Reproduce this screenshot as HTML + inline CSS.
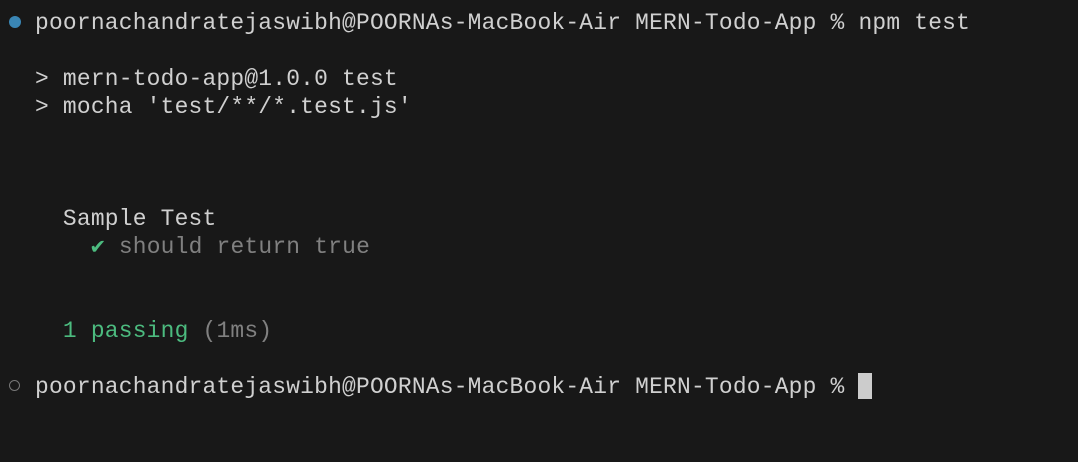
<!DOCTYPE html>
<html><head><style>
html,body{margin:0;padding:0;background:#181818;width:1078px;height:462px;overflow:hidden}
pre{position:absolute;left:35px;top:9px;margin:0;font-family:"Liberation Mono",monospace;font-size:22.9px;letter-spacing:0.22px;line-height:28px;color:#d0d0d0}
.g{color:#4cbb7f}.d{color:#808080}
.cur{display:inline-block;width:14px;height:26px;background:#cccccc;vertical-align:-6px}
.dot{position:absolute;left:9px;width:12px;height:12px;border-radius:50%}
</style></head><body>
<div class="dot" style="top:16px;background:#3a86b5"></div>
<div class="dot" style="top:380px;width:9px;height:9px;border:1.5px solid #777;left:9px"></div>
<pre>poornachandratejaswibh@POORNAs-MacBook-Air MERN-Todo-App % npm test

> mern-todo-app@1.0.0 test
> mocha 'test/**/*.test.js'



  Sample Test
    <span class="g">✔</span> <span class="d">should return true</span>


  <span class="g">1 passing</span> <span class="d">(1ms)</span>

poornachandratejaswibh@POORNAs-MacBook-Air MERN-Todo-App % <span class="cur"></span></pre>
</body></html>
